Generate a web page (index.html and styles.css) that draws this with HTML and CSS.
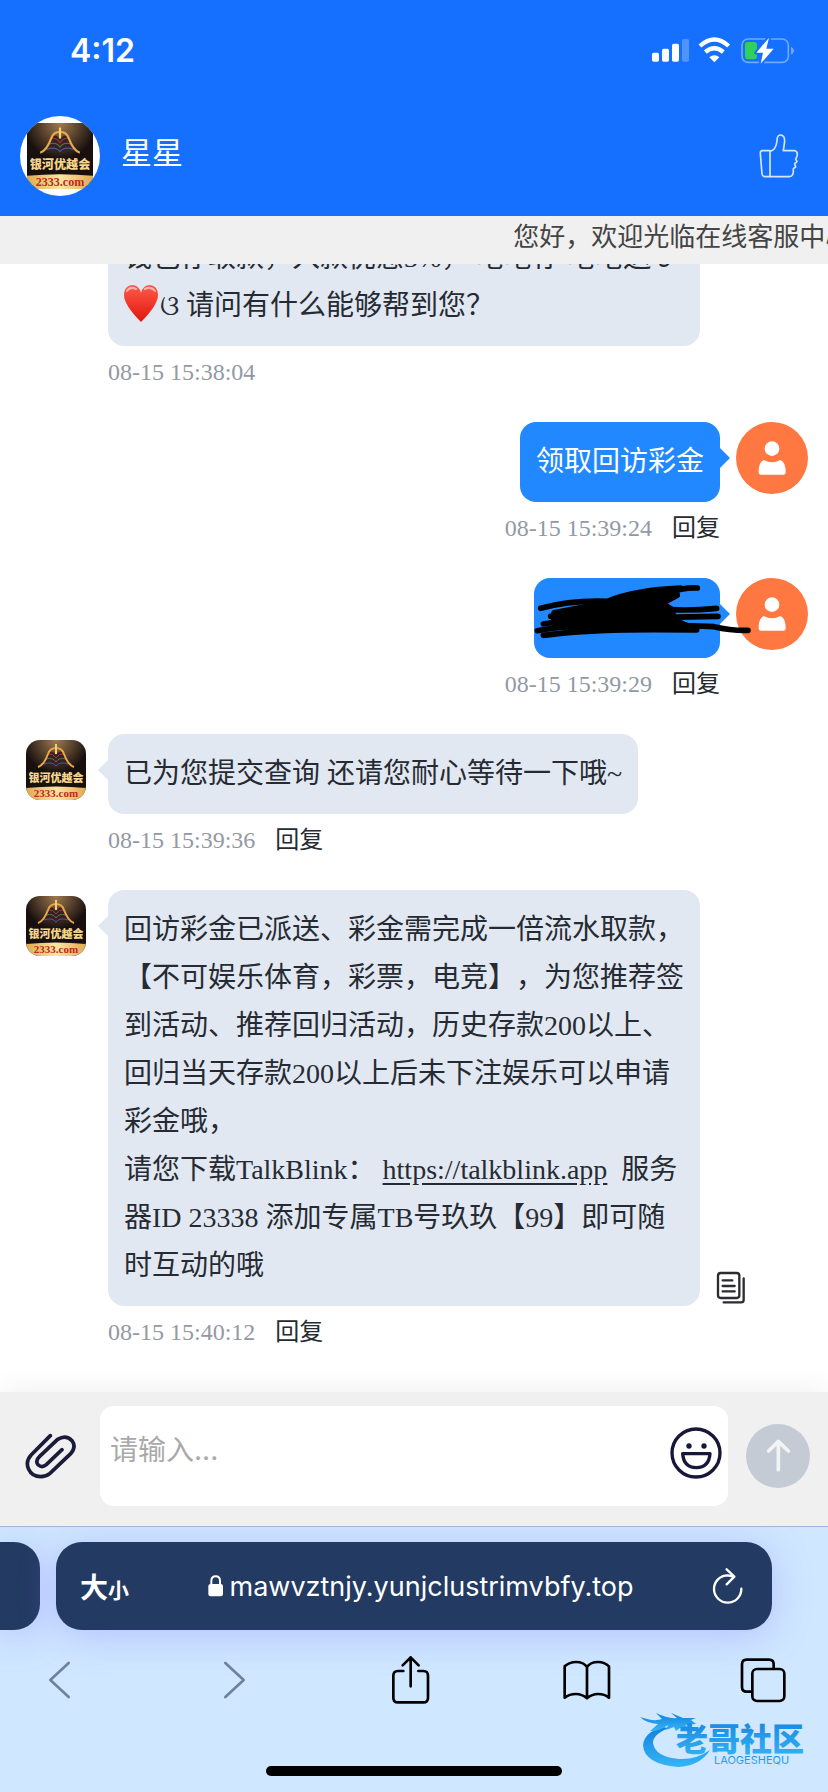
FILE: index.html
```
<!DOCTYPE html>
<html lang="zh-CN">
<head>
    <meta charset="UTF-8">
    <meta name="viewport" content="width=device-width, initial-scale=1.0">
    <title>在线客服</title>
    <link rel="stylesheet" href="styles.css">
</head>
<body>
    <!-- shared drawings -->
    <svg class="sprite" aria-hidden="true">
        <defs>
            <radialGradient id="glow" cx="50%" cy="0%" r="55%">
                <stop offset="0" stop-color="#a07a50"/>
                <stop offset="1" stop-color="#17100f"/>
            </radialGradient>
            <linearGradient id="gold" x1="0" y1="0" x2="1" y2="0">
                <stop offset="0" stop-color="#e0aa50"/>
                <stop offset="0.5" stop-color="#fbe6a4"/>
                <stop offset="1" stop-color="#e0aa50"/>
            </linearGradient>
            <linearGradient id="heartRed" x1="0" y1="0" x2="0" y2="1">
                <stop offset="0" stop-color="#ff5a4a"/>
                <stop offset="1" stop-color="#e0160c"/>
            </linearGradient>
            <linearGradient id="dragonBlue" x1="0" y1="0" x2="0" y2="1">
                <stop offset="0" stop-color="#1580dd"/>
                <stop offset="1" stop-color="#35b6f6"/>
            </linearGradient>
        </defs>
        <symbol id="brand" viewBox="0 0 60 60">
            <rect width="60" height="60" fill="url(#glow)"/>
            <path d="M0 48Q30 45 60 48V60H0Z" fill="url(#gold)"/>
            <path d="M18 26Q25 22 30 28Q35 22 42 26L37 12Q33 10 30 15Q27 10 23 12Z" fill="#3a2026"/>
            <path d="M22 14Q27 13 30 18Q33 13 38 14" fill="none" stroke="#9a3a32" stroke-width="1"/>
            <path d="M20 19Q27 17 30 22Q33 17 40 19" fill="none" stroke="#4a7a3c" stroke-width="1"/>
            <path d="M18 24Q26 21 30 26Q34 21 42 24" fill="none" stroke="#3d5f96" stroke-width="1"/>
            <path d="M12 27Q18 25 22 14Q24 8 30 8Q36 8 38 14Q42 25 48 27" fill="none" stroke="#e9a845" stroke-width="2"/>
            <path d="M30 4V14" stroke="#f2cf75" stroke-width="2"/>
            <text x="30" y="42" class="brand-name">银河优越会</text>
            <text x="30" y="57" class="brand-site">2333.com</text>
        </symbol>
        <symbol id="user" viewBox="0 0 216 216">
            <circle cx="108" cy="108" r="108" fill="#ff7741"/>
            <circle cx="108" cy="80" r="22" fill="#fff"/>
            <path d="M68 150Q68 120 83 114Q108 128 133 114Q149 120 149 150Q149 158 142 158H75Q68 158 68 150Z" fill="#fff"/>
        </symbol>
    </svg>

    <header class="header">
        <div class="status-bar">
            <span class="clock">4:12</span>
            <div class="status-icons">
                <svg width="39" height="25" viewBox="0 0 117 75" fill="#fff">
                    <rect x="3" y="44" width="21" height="27" rx="5"/>
                    <rect x="33" y="32" width="21" height="39" rx="5"/>
                    <rect x="63" y="17" width="21" height="54" rx="5"/>
                    <rect x="93" y="3" width="21" height="68" rx="5" opacity="0.25"/>
                </svg>
                <svg width="33" height="26" viewBox="0 0 99 78" fill="none" stroke="#fff">
                    <path d="M6 27Q49 -12 92 27" stroke-width="13"/>
                    <path d="M22 45Q49 22 76 45" stroke-width="13"/>
                    <path d="M34 61Q49 48 64 61L49 76Z" fill="#fff" stroke="none"/>
                </svg>
                <svg width="57" height="28" viewBox="0 0 171 84">
                    <rect x="9" y="9" width="139" height="70" rx="18" fill="none" stroke="#fff" stroke-opacity="0.4" stroke-width="5"/>
                    <path d="M156 32Q165 36 165 44T156 56Z" fill="#fff" opacity="0.4"/>
                    <rect x="18" y="18" width="36" height="52" rx="9" fill="#30d158"/>
                    <path d="M90 5L52 50H72L65 83L104 38H82Z" fill="#fff" stroke="#1570ff" stroke-width="12" stroke-linejoin="round" paint-order="stroke"/>
                </svg>
            </div>
        </div>
        <div class="agent">
            <div class="agent-photo">
                <svg width="66" height="66"><use href="#brand"/></svg>
            </div>
            <h1 class="agent-name">星星</h1>
            <button type="button" class="icon-button" aria-label="点赞">
                <svg width="42" height="46" viewBox="0 0 126 138" fill="none" stroke="#d6e6ff" stroke-width="5" stroke-linejoin="round">
                    <path d="M36 53H13Q6 54 7 62L12 123Q13 131 22 131H36Z"/>
                    <path d="M36 55Q54 51 57 24Q57 6 67 6Q81 7 80 25L76 53H110Q121 56 117 70L113 78L117 86L110 92L113 102L106 107Q108 131 94 131H36"/>
                </svg>
            </button>
        </div>
    </header>

    <div class="notice"><span>您好，欢迎光临在线客服中心</span></div>

    <main class="chat">
        <div class="message agent-message continued">
            <div class="content">
                <div class="bubble">钱包存取款，入款优惠3%， 笔笔存 笔笔送 ʚ<svg class="heart" width="34" height="38" viewBox="0 0 34 38"><path d="M17 37Q0 20 0 10Q0 1 8 0Q15 0 17 8Q19 0 26 0Q34 1 34 10Q34 20 17 37Z" fill="url(#heartRed)"/><path d="M3 6Q6 1 12 4M21 4Q27 1 31 6" fill="none" stroke="#ffb3a8" stroke-width="2" stroke-linecap="round"/></svg>ଓ 请问有什么能够帮到您？</div>
                <div class="meta"><time>08-15 15:38:04</time></div>
            </div>
        </div>

        <div class="message my-message">
            <div class="content">
                <div class="bubble">领取回访彩金</div>
                <div class="meta"><time>08-15 15:39:24</time><button type="button" class="reply">回复</button></div>
            </div>
            <svg class="photo" width="72" height="72"><use href="#user"/></svg>
        </div>

        <div class="message my-message">
            <div class="content">
                <div class="bubble hidden-text">
                    <svg class="scribble" width="218" height="80" viewBox="0 0 654 240" fill="none" stroke="#000" stroke-width="17" stroke-linecap="round" stroke-linejoin="round">
                        <path d="M60 104L215 74L290 54L425 36L430 52L385 76L410 92L425 128L480 152L150 155L60 140Z" fill="#000"/>
                        <path d="M20 91Q110 66 220 70Q300 36 440 30"/>
                        <path d="M400 44Q450 28 490 30"/>
                        <path d="M50 115Q170 84 410 95Q480 98 548 91"/>
                        <path d="M28 138Q180 110 380 118L552 115"/>
                        <path d="M10 158Q160 130 540 146Q590 158 642 157"/>
                        <path d="M28 172Q180 150 488 156"/>
                    </svg>
                </div>
                <div class="meta"><time>08-15 15:39:29</time><button type="button" class="reply">回复</button></div>
            </div>
            <svg class="photo" width="72" height="72"><use href="#user"/></svg>
        </div>

        <div class="message agent-message">
            <svg class="photo" width="60" height="60"><use href="#brand"/></svg>
            <div class="content">
                <div class="bubble">已为您提交查询 还请您耐心等待一下哦~</div>
                <div class="meta"><time>08-15 15:39:36</time><button type="button" class="reply">回复</button></div>
            </div>
        </div>

        <div class="message agent-message">
            <svg class="photo" width="60" height="60"><use href="#brand"/></svg>
            <div class="content">
                <div class="bubble">
                    回访彩金已派送、彩金需完成一倍流水取款，【不可娱乐体育，彩票，电竞】，为您推荐签到活动、推荐回归活动，历史存款200以上、回归当天存款200以上后未下注娱乐可以申请彩金哦，<br>
                    请您下载TalkBlink： <a href="https://talkblink.app">https://talkblink.app</a>&nbsp; 服务器ID 23338 添加专属TB号玖玖【99】即可随时互动的哦
                    <button type="button" class="copy" aria-label="复制">
                        <svg width="30" height="33" viewBox="0 0 90 99" fill="none" stroke="#2b2b30" stroke-width="7" stroke-linecap="round">
                            <rect x="6" y="6" width="64" height="75" rx="8"/>
                            <path d="M20 28H49M20 45H56M20 61H56M83 22V86Q83 94 75 94H23"/>
                        </svg>
                    </button>
                </div>
                <div class="meta"><time>08-15 15:40:12</time><button type="button" class="reply">回复</button></div>
            </div>
        </div>
    </main>

    <form class="composer">
        <button type="button" class="icon-button" aria-label="附件">
            <svg width="54" height="48" viewBox="0 0 162 144" fill="none" stroke="#1b1b3a" stroke-width="11" stroke-linecap="round">
                <path d="M79 11L22 68Q3 88 14 112Q24 134 50 134Q66 134 78 124L140 65Q158 45 144 26Q126 7 101 22L47 73Q32 87 43 99Q54 109 67 98L114 53"/>
            </svg>
        </button>
        <div class="input-box">
            <textarea rows="1" placeholder="请输入..." aria-label="请输入"></textarea>
            <button type="button" class="icon-button emoji" aria-label="表情">
                <svg width="52" height="52" viewBox="0 0 156 156" fill="none" stroke="#17173a" stroke-width="10" stroke-linejoin="round">
                    <circle cx="78" cy="78" r="72"/>
                    <path d="M38 80H120Q117 122 79 122T38 80Z"/>
                    <circle cx="57" cy="57" r="8" fill="#17173a" stroke="none"/>
                    <circle cx="102" cy="57" r="8" fill="#17173a" stroke="none"/>
                </svg>
            </button>
        </div>
        <button type="submit" class="icon-button" aria-label="发送">
            <svg width="64" height="64" viewBox="0 0 192 192">
                <circle cx="96" cy="96" r="96" fill="#c5cbd4"/>
                <path d="M97 137V53M68 81L97 52L127 81" fill="none" stroke="#f2f3f5" stroke-width="11" stroke-linecap="round" stroke-linejoin="round"/>
            </svg>
        </button>
    </form>

    <footer class="browser">
        <div class="tabs">
            <div class="tab previous-tab"></div>
            <div class="tab current-tab">
                <button type="button" class="text-size" aria-label="文字大小">大<small>小</small></button>
                <div class="address">
                    <svg width="16" height="22" viewBox="0 0 48 66">
                        <rect x="1" y="27" width="44" height="37" rx="7" fill="#fff"/>
                        <path d="M10 28V18Q10 4 23 4T36 18V28" fill="none" stroke="#fff" stroke-width="6"/>
                    </svg>
                    <span>mawvztnjy.yunjclustrimvbfy.top</span>
                </div>
                <button type="button" class="icon-button" aria-label="刷新">
                    <svg width="32" height="37" viewBox="0 0 96 111" fill="none" stroke="#fff" stroke-width="7" stroke-linecap="round" stroke-linejoin="round">
                        <path d="M88 62A41 41 0 1 1 47 22L66 26M44 4L67 26L44 49"/>
                    </svg>
                </button>
            </div>
        </div>
        <nav class="toolbar">
            <button type="button" class="icon-button" aria-label="后退">
                <svg width="24" height="42" viewBox="0 0 72 126" fill="none" stroke="#6f819c" stroke-width="8" stroke-linecap="round" stroke-linejoin="round"><path d="M65 12L10 63L65 114"/></svg>
            </button>
            <button type="button" class="icon-button" aria-label="前进">
                <svg width="24" height="42" viewBox="0 0 72 126" fill="none" stroke="#6f819c" stroke-width="8" stroke-linecap="round" stroke-linejoin="round"><path d="M7 12L62 63L7 114"/></svg>
            </button>
            <button type="button" class="icon-button" aria-label="分享">
                <svg width="42" height="50" viewBox="0 0 126 150" fill="none" stroke="#000" stroke-width="8" stroke-linecap="round" stroke-linejoin="round"><path d="M40 48H24Q10 48 10 62V128Q10 142 24 142H100Q114 142 114 128V62Q114 48 100 48H85M62 94V7M38 31L62 7L86 31"/></svg>
            </button>
            <button type="button" class="icon-button" aria-label="书签">
                <svg width="50" height="42" viewBox="0 0 150 126" fill="none" stroke="#000" stroke-width="8" stroke-linejoin="round"><path d="M75 24Q65 9 42 9Q22 9 8 22V116Q22 105 42 105Q60 105 75 118Q90 105 108 105Q128 105 141 116V22Q128 9 108 9Q85 9 75 24ZM75 24V118"/></svg>
            </button>
            <button type="button" class="icon-button" aria-label="标签页">
                <svg width="48" height="46" viewBox="0 0 144 138" fill="none" stroke="#000" stroke-width="8"><rect x="40" y="36" width="96" height="96" rx="14"/><path d="M40 104H23Q9 104 9 90V22Q9 8 23 8H90Q104 8 104 22V36"/></svg>
            </button>
        </nav>
        <div class="home-indicator"></div>
        <div class="watermark">
            <svg width="176" height="62" viewBox="0 0 176 62" fill="url(#dragonBlue)">
                <path d="M22 15Q4 21 3 33Q4 52 38 55Q60 54 70 38Q56 48 39 47Q15 45 13 31Q13 22 29 16Z"/>
                <path d="M0 5Q14 10 22 7L16 1Q28 7 37 6L31 1L43 6L56 6L51 8L56 12L45 13L51 17L40 16L36 19L34 15L26 18L28 13Q18 20 10 19L18 12Q6 11 0 5Z"/>
                <text x="36" y="39" class="mark-name">老哥社区</text>
                <text x="74" y="52" class="mark-latin">LAOGESHEQU</text>
            </svg>
        </div>
    </footer>
</body>
</html>
```
FILE: styles.css
```
* {
    box-sizing: border-box;
}

body {
    margin: 0;
    height: 100vh;
    display: flex;
    flex-direction: column;
    background-color: #fff;
    color: #262b33;
    font-family: "Liberation Serif", "Noto Sans CJK SC", serif;
    font-size: 28px;
    text-spacing-trim: space-all;
}

button {
    padding: 0;
    border: none;
    background: none;
    color: inherit;
    font: inherit;
    cursor: pointer;
}

svg {
    display: block;
    flex-shrink: 0;
}

.sprite {
    position: absolute;
    width: 0;
    height: 0;
}

.icon-button {
    display: flex;
    align-items: center;
    justify-content: center;
}

/* Header */
.header {
    background-color: #1570ff;
    color: #fff;
}

.status-bar {
    height: 100px;
    padding: 0 32px 0 70px;
    display: flex;
    align-items: center;
    justify-content: space-between;
}

.clock {
    font-family: Inter, sans-serif;
    font-size: 32px;
    font-weight: 600;
}

.status-icons {
    display: flex;
    align-items: center;
    gap: 8px;
}

.agent {
    padding: 16px 28px 20px 20px;
    display: flex;
    align-items: center;
}

.agent-photo {
    width: 80px;
    height: 80px;
    border-radius: 50%;
    overflow: hidden;
    display: flex;
    align-items: center;
    justify-content: center;
    background-color: #fff;
}

.agent-name {
    flex: 1;
    margin: 0 0 4px 21px;
    font-size: 31px;
    font-weight: normal;
    line-height: 40px;
}

.brand-name {
    font-family: "Noto Sans CJK SC", sans-serif;
    font-size: 11px;
    font-weight: 900;
    fill: #f5d68a;
    text-anchor: middle;
}

.brand-site {
    font-family: "Liberation Serif", serif;
    font-size: 11px;
    font-weight: bold;
    fill: #c0281c;
    text-anchor: middle;
}

.notice {
    height: 48px;
    padding-left: 62%;
    overflow: hidden;
    white-space: nowrap;
    background-color: #f0f0f0;
    color: #444;
    font-size: 26px;
    line-height: 44px;
}

/* Chat */
.chat {
    flex: 1;
    min-height: 0;
    overflow: hidden;
    padding-bottom: 10px;
    display: flex;
    flex-direction: column;
    justify-content: flex-end;
}

.message {
    flex-shrink: 0;
    display: flex;
    align-items: flex-start;
}

.agent-message {
    padding: 0 128px 0 26px;
    gap: 22px;
}

/* no photo beside it, so keep the bubble in line with the others */
.continued {
    padding-left: 108px;
}

.my-message {
    padding: 0 20px 0 128px;
    gap: 16px;
    justify-content: flex-end;
}

.agent-message .photo {
    margin-top: 6px;
    border-radius: 14px;
}

.content {
    display: flex;
    flex-direction: column;
    align-items: flex-start;
}

.my-message .content {
    align-items: flex-end;
}

.bubble {
    position: relative;
    padding: 16px;
    border-radius: 16px;
    background-color: #e2e8f1;
    line-height: 48px;
}

.bubble::before {
    content: "";
    position: absolute;
    top: 26px;
    right: 100%;
    border: 10px solid transparent;
    border-left-width: 0;
    border-right-color: #e2e8f1;
}

.my-message .bubble {
    background-color: #2288ff;
    color: #fff;
}

.my-message .bubble::before {
    right: auto;
    left: 100%;
    border-width: 10px 0 10px 10px;
    border-left-color: #2288ff;
}

.bubble a {
    color: inherit;
    text-underline-offset: 4px;
}

.heart {
    display: inline-block;
    margin-right: 2px;
    vertical-align: -8px;
}

.hidden-text {
    width: 186px;
    height: 80px;
}

.scribble {
    position: absolute;
    top: 0;
    left: 0;
    z-index: 1;
}

.copy {
    position: absolute;
    bottom: 2px;
    left: 100%;
    margin-left: 16px;
}

.meta {
    margin: 10px 0 34px;
    display: flex;
    gap: 20px;
    font-size: 24px;
    line-height: 32px;
}

.meta time {
    color: #9299a5;
}

/* Composer */
.composer {
    padding: 14px 18px 20px 20px;
    display: flex;
    align-items: center;
    gap: 18px;
    background-color: #f0f0f0;
    box-shadow: 0 0 30px rgba(0, 0, 0, 0.07);
}

.composer > .icon-button:first-child {
    width: 62px;
    justify-content: flex-start;
    padding-left: 4px;
}

.input-box {
    flex: 1;
    padding-right: 6px;
    display: flex;
    align-items: center;
    border-radius: 14px;
    background-color: #fff;
}

.input-box textarea {
    flex: 1;
    min-width: 0;
    height: 100px;
    padding: 24px 10px 36px;
    border: none;
    outline: none;
    resize: none;
    background: none;
    font-family: Inter, "Noto Sans CJK SC", sans-serif;
    font-size: 28px;
    line-height: 40px;
}

.input-box textarea::placeholder {
    color: #a9a9a9;
}

.emoji {
    margin-bottom: 6px;
}

/* Browser bar */
.browser {
    position: relative;
    height: 266px;
    padding-top: 15px;
    border-top: 1px solid #9db9dc;
    overflow: hidden;
    background-color: #cfe7ff;
}

.tabs {
    display: flex;
    gap: 16px;
    padding-right: 56px;
}

.tab {
    height: 88px;
    background-color: #233a62;
    box-shadow: 0 6px 36px rgba(140, 140, 255, 0.4);
}

.previous-tab {
    width: 40px;
    border-radius: 0 26px 26px 0;
}

.current-tab {
    flex: 1;
    padding: 0 28px 0 24px;
    border-radius: 26px;
    display: flex;
    align-items: center;
    justify-content: space-between;
    color: #fff;
    font-family: Inter, "Noto Sans CJK SC", sans-serif;
}

.text-size {
    font-weight: bold;
}

.text-size small {
    font-size: 21px;
}

.address {
    display: flex;
    align-items: center;
    gap: 6px;
    font-size: 27px;
}

.toolbar {
    height: 100px;
    padding: 0 38px 0 32px;
    display: flex;
    align-items: center;
    justify-content: space-between;
}

.toolbar .icon-button {
    width: 54px;
}

.home-indicator {
    width: 296px;
    height: 10px;
    margin: 36px auto 0;
    border-radius: 5px;
    background-color: #000;
}

.watermark {
    position: absolute;
    right: 12px;
    bottom: 18px;
}

.mark-name {
    font-family: "Noto Sans CJK SC", sans-serif;
    font-size: 32px;
    font-weight: 900;
}

.mark-latin {
    font-family: Inter, sans-serif;
    font-size: 11px;
}
```
